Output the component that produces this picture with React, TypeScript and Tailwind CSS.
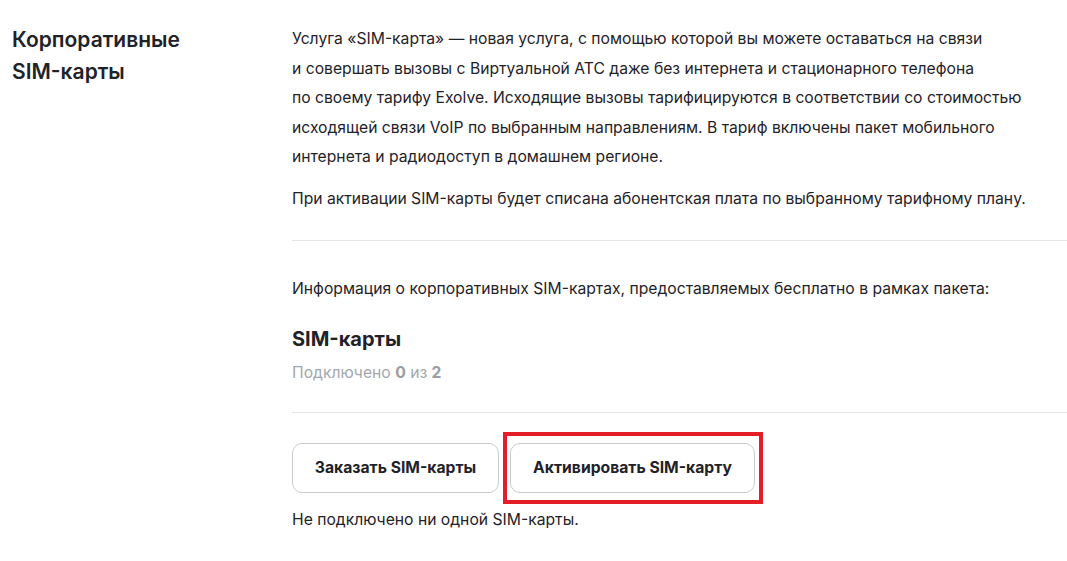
export default function App() {
  return (
    <div className="min-h-[561px] w-[1067px] bg-white font-['Inter','Liberation_Sans',sans-serif] text-[#1f2229]">
      <section className="flex pt-[24px]">
        <h2 className="w-[280px] shrink-0 pl-[12px] text-[21px] font-semibold leading-[32px]">
          Корпоративные
          <br />
          SIM-карты
        </h2>

        <div className="flex-1 pl-[12px]">
          <p className="text-[15.7px] leading-[29.5px]">
            Услуга «SIM-карта» — новая услуга, с помощью которой вы можете оставаться на связи
            <br />
            и совершать вызовы с Виртуальной АТС даже без интернета и стационарного телефона
            <br />
            по своему тарифу Exolve. Исходящие вызовы тарифицируются в соответствии со стоимостью
            <br />
            исходящей связи VoIP по выбранным направлениям. В тариф включены пакет мобильного
            <br />
            интернета и радиодоступ в домашнем регионе.
          </p>
          <p className="mt-[12px] whitespace-nowrap text-[15.7px] leading-[29.5px]">
            При активации SIM-карты будет списана абонентская плата по выбранному тарифному плану.
          </p>

          <hr className="mt-[27px] border-t border-[#e3e4e8]" />

          <p className="mt-[33px] text-[15.7px] leading-[30px]">
            Информация о корпоративных SIM-картах, предоставляемых бесплатно в рамках пакета:
          </p>

          <h3 className="mt-[20px] text-[20px] font-bold leading-[30px]">SIM-карты</h3>
          <p className="mt-[4px] text-[15.7px] leading-[30px] text-[#a3a7ad]">
            Подключено <b className="font-bold text-[#9a9ea5]">0</b> из{" "}
            <b className="font-bold text-[#9a9ea5]">2</b>
          </p>

          <hr className="mt-[24px] border-t border-[#e3e4e8]" />

          <div className="mt-[30px] flex gap-[11px]">
            <button className="h-[50px] w-[207px] rounded-[10px] border border-[#c9cbcf] bg-white text-[15.7px] font-bold text-[#1f2229]">
              Заказать SIM-карты
            </button>
            <div className="relative">
              <button className="h-[50px] w-[245px] rounded-[10px] border border-[#c9cbcf] bg-white text-[15.7px] font-bold text-[#1f2229]">
                Активировать SIM-карту
              </button>
              {/* рамка-выделение поверх кнопки */}
              <span className="pointer-events-none absolute -bottom-[11px] -left-[7px] -right-[8px] -top-[11px] border-[4px] border-[#e41e26]" />
            </div>
          </div>

          <p className="mt-[12px] text-[15.7px] leading-[30px]">Не подключено ни одной SIM-карты.</p>
        </div>
      </section>
    </div>
  );
}
